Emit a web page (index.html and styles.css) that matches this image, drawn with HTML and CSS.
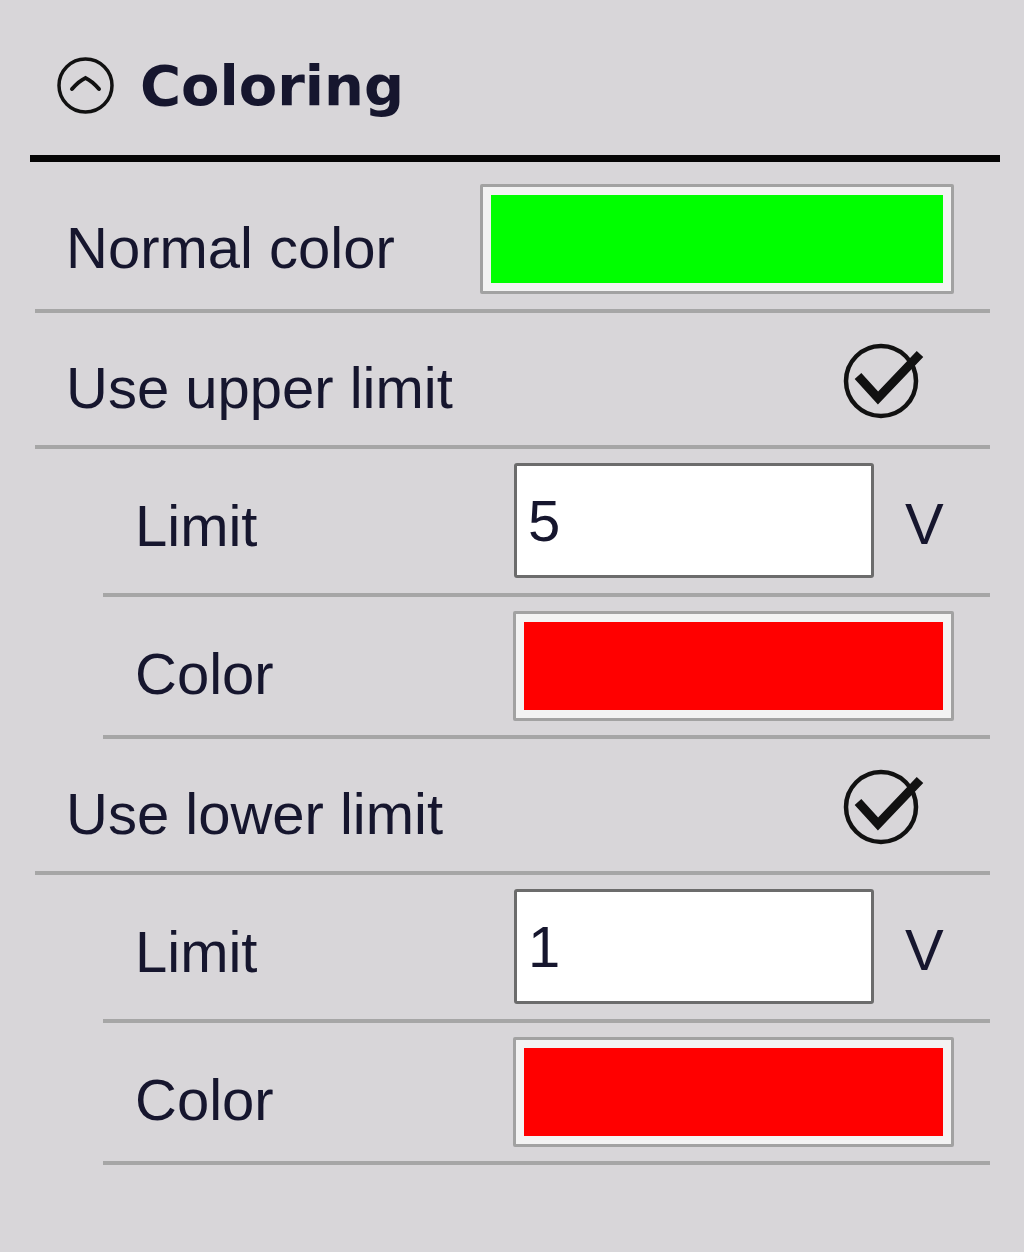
FILE: index.html
```html
<!DOCTYPE html>
<html>
<head>
<meta charset="utf-8">
<link rel="stylesheet" href="styles.css">
</head>
<body>
<div class="panel">
  <div class="header">
    <svg class="collapse" width="57" height="57" viewBox="0 0 57 57">
      <circle cx="28.5" cy="28.5" r="26.5" fill="none" stroke="#111" stroke-width="3.5"/>
      <path d="M15 32 Q22 24 28.5 21 Q35 24 42 32" fill="none" stroke="#111" stroke-width="4" stroke-linecap="round"/>
    </svg>
    <span class="title">Coloring</span>
  </div>
  <div class="rule"></div>
  <div class="rows">
    <div class="row row-color">
      <span class="label">Normal color</span>
      <div class="swatch swatch-wide"><div class="fill fill-green"></div></div>
    </div>
    <div class="row row-check">
      <span class="label">Use upper limit</span>
      <svg class="check" width="90" height="90" viewBox="0 0 90 90">
        <circle cx="45" cy="45" r="35" fill="none" stroke="#111" stroke-width="4.5"/>
        <path d="M22 40 L42 62 L84 18" fill="none" stroke="#111" stroke-width="9" stroke-linejoin="miter"/>
      </svg>
    </div>
    <div class="row row-input sub">
      <span class="label">Limit</span>
      <div class="field-group">
        <div class="field">5</div>
        <span class="unit">V</span>
      </div>
    </div>
    <div class="row row-color sub">
      <span class="label">Color</span>
      <div class="swatch"><div class="fill fill-red"></div></div>
    </div>
    <div class="row row-check">
      <span class="label">Use lower limit</span>
      <svg class="check" width="90" height="90" viewBox="0 0 90 90">
        <circle cx="45" cy="45" r="35" fill="none" stroke="#111" stroke-width="4.5"/>
        <path d="M22 40 L42 62 L84 18" fill="none" stroke="#111" stroke-width="9" stroke-linejoin="miter"/>
      </svg>
    </div>
    <div class="row row-input sub">
      <span class="label">Limit</span>
      <div class="field-group">
        <div class="field">1</div>
        <span class="unit">V</span>
      </div>
    </div>
    <div class="row row-color sub">
      <span class="label">Color</span>
      <div class="swatch"><div class="fill fill-red"></div></div>
    </div>
  </div>
</div>
</body>
</html>
```
FILE: styles.css
```css
html, body {
  margin: 0;
  padding: 0;
  background: #d8d6d9;
}
body {
  width: 1024px;
  height: 1252px;
  overflow: hidden;
  font-family: "Liberation Sans", Arial, sans-serif;
  color: #16162e;
}
.panel {
  display: flex;
  flex-direction: column;
}
.header {
  display: flex;
  align-items: center;
  padding: 57px 0 41px 57px;
  height: 57px;
}
.collapse {
  display: block;
  flex: none;
}
.title {
  font-family: "DejaVu Sans", Verdana, sans-serif;
  font-weight: bold;
  font-size: 56px;
  line-height: 57px;
  margin-left: 26px;
  letter-spacing: 0;
}
.rule {
  margin-left: 30px;
  width: 970px;
  height: 7px;
  background: #050505;
}
.rows {
  margin-top: 9px;
  margin-left: 35px;
  width: 955px;
  display: flex;
  flex-direction: column;
}
.row {
  display: flex;
  align-items: flex-start;
  border-bottom: 4px solid #a6a6a6;
  box-sizing: border-box;
}
.row.sub {
  margin-left: 68px;
}
.row-color { height: 142px; }
.row-check { height: 136px; }
.row-input { height: 148px; }
.label {
  font-size: 58px;
  line-height: 60px;
  margin-top: 47px;
  padding-left: 31px;
  flex: 1;
  white-space: nowrap;
}
.row.sub .label {
  padding-left: 32px;
}
.row-check .label {
  margin-top: 45px;
}
.swatch {
  margin-top: 14px;
  margin-right: 36px;
  width: 441px;
  height: 110px;
  box-sizing: border-box;
  border: 3px solid #a2a2a2;
  border-radius: 2px;
  background: #f3f3f3;
  padding: 8px;
}
.swatch-wide {
  width: 474px;
  margin-top: 13px;
}
.fill {
  width: 100%;
  height: 100%;
}
.fill-green { background: #00ff00; }
.fill-red { background: #ff0000; }
.check {
  display: block;
  flex: none;
  margin-top: 23px;
  margin-right: 64px;
}
.field-group {
  margin-top: 14px;
  width: 476px;
  display: flex;
  align-items: center;
}
.field {
  width: 360px;
  height: 115px;
  box-sizing: border-box;
  border: 3px solid #6c6c6c;
  border-radius: 3px;
  background: #ffffff;
  padding-left: 11px;
  font-size: 58px;
  line-height: 60px;
  display: flex;
  align-items: center;
}
.unit {
  margin-left: 31px;
  font-size: 58px;
  line-height: 60px;
  padding-top: 6px;
}
```
